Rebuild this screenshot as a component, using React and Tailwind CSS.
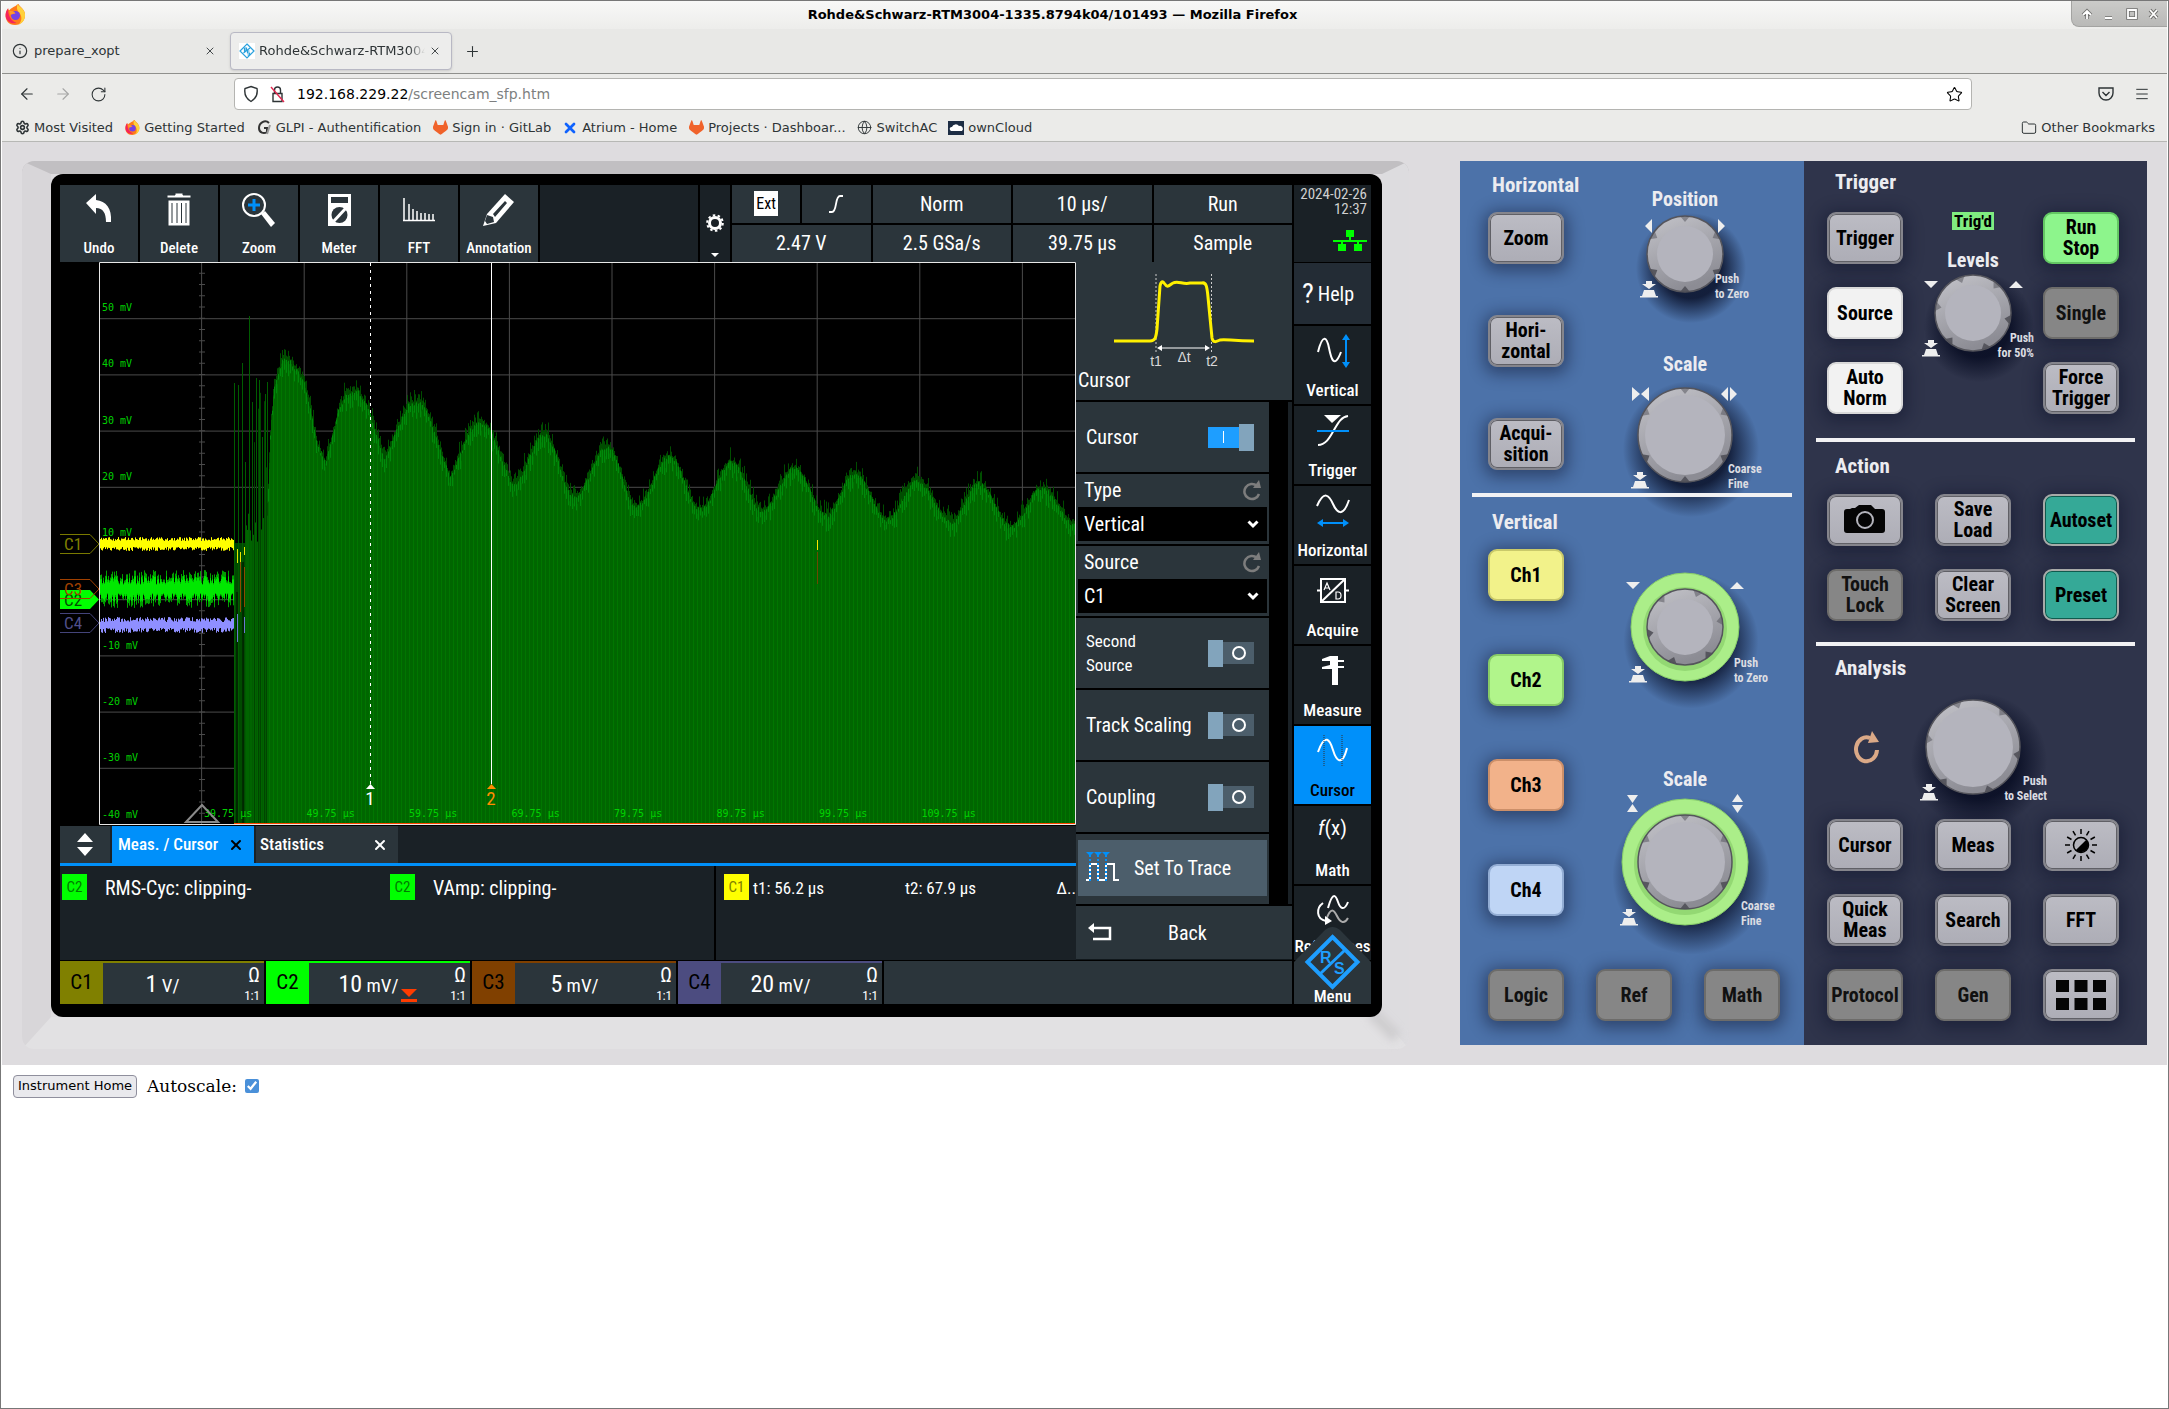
import React from 'react';
import { Info, X, Plus, ArrowLeft, ArrowRight, RotateCw, Star, Menu, Folder, Globe, Settings } from 'lucide-react';
import { SiGitlab } from 'react-icons/si';

/* ---------- browser chrome ---------- */

const Bookmark = ({ icon, children }) => (
    <a href="#" className="flex items-center gap-1 whitespace-nowrap">
        <span className="w-4 h-4 flex items-center justify-center">{icon}</span>
        {children}
    </a>
);

const FirefoxLogo = ({ size }) => (
    <svg width={size} height={size} viewBox="0 0 20 20">
        <path d="M10 2c1-1 1.500-1.500 3-2 0 2 5 4 6 9 .8 6-3.500 11-9.500 11S0 15.500 .6 10C.8 7 2 5.500 3 4c0 1 .4 1.600 1 2 2-2 4-3 6-4z" fill="#ff7a1a" />
        <path d="M12 0c1 2.500 6 4 7 9 .7 5-2 9-6 10.500 4-4 3-9 0-12C11 5.500 11 3 12 0z" fill="#ffd13a" />
        <path d="M.6 10C.8 7 2 5.500 3 4c0 3 0 11 8 14-6 2-11-3-10.400-8z" fill="#f5235b" />
        <circle cx="10" cy="11" r="4.300" fill="#7542e5" />
        <path d="M4 7c3-1 5 0 6 2-2 0-3 1-5 1z" fill="#ff9a2a" />
    </svg>
);

const RsFavicon = () => (
    <svg width="16" height="16" viewBox="0 0 16 16" className="bg-white">
        <path d="M8 1l7 7-7 7-7-7zM4.500 10L11 5M5.500 5v4M5.500 5h2v2h-2M10.500 8h-2v2h2v2h-2" fill="none" stroke="#2aa1dd" strokeWidth="1.200" />
    </svg>
);

const GitLab = () => <SiGitlab size={15} color="#f0622a" />;

const Chrome = () => (
    <header className="text-[13px] text-[#2e3436] bg-[#ebebe9]">
        <div className="relative h-7 pr-16 flex items-center justify-center bg-linear-to-b from-[#f8f8f7] to-[#ededeb]">
            <span className="absolute left-[3px] top-[3px]"><FirefoxLogo size={21} /></span>
            <h1 className="font-bold text-black">Rohde&amp;Schwarz-RTM3004-1335.8794k04/101493 — Mozilla Firefox</h1>
            <div className="absolute right-0 top-0 h-[26px] w-24 rounded-bl-lg border-l border-b border-[#a3a3a1] bg-linear-to-b from-[#cbcbc9] to-[#b9b9b7] flex items-center justify-center">
                <svg width="94" height="16" viewBox="0 0 94 16" fill="none">
                    <path d="M14 13V5M10 9l4-4 4 4M32 12h7M55 4h8v8h-8zM77 4l7 8M84 4l-7 8" stroke="#6f6f6d" strokeWidth="3.500" />
                    <path d="M14 13V5M10 9l4-4 4 4M32 12h7M55 4h8v8h-8zM77 4l7 8M84 4l-7 8" stroke="#fff" strokeWidth="1.800" />
                </svg>
            </div>
        </div>
        <div className="h-[45px] flex items-center bg-[#e8e8e6] border-b border-[#8f908d]">
            <div className="w-[228px] pl-2.5 pr-3.5 flex items-center gap-1.5">
                <Info size={16} strokeWidth={1.75} />
                <span className="flex-1">prepare_xopt</span>
                <X size={12} strokeWidth={1.75} />
            </div>
            <div className="w-[222px] h-[38px] pl-2 pr-2.5 flex items-center gap-1 rounded border border-[#b8b8c4] bg-[#ededec] shadow-sm">
                <RsFavicon />
                <span className="flex-1 overflow-hidden whitespace-nowrap mask-r-from-90%">Rohde&amp;Schwarz-RTM3004-1335</span>
                <X size={12} strokeWidth={1.75} />
            </div>
            <button aria-label="New tab" className="ml-3"><Plus size={17} strokeWidth={1.500} /></button>
        </div>
        <div className="h-10 flex items-center">
            <div className="w-[232px] pl-4 flex items-center gap-[18px]">
                <button aria-label="Back"><ArrowLeft size={18} strokeWidth={1.500} /></button>
                <button aria-label="Forward" className="text-[#a5a6a5]"><ArrowRight size={18} strokeWidth={1.500} /></button>
                <button aria-label="Reload"><RotateCw size={17} strokeWidth={1.500} /></button>
            </div>
            <div className="flex-1 h-8 px-2 flex items-center bg-white border border-[#b4b4b1] rounded text-[14px]">
                <svg width="16" height="18" viewBox="0 0 16 18" fill="none" stroke="#2e3436" strokeWidth="1.400"><path d="M8 1.500l6 2c1 6-1 10-6 13-5-3-7-7-6-13z" /></svg>
                <svg width="18" height="18" viewBox="0 0 18 18" fill="none" stroke="#2e3436" strokeWidth="1.400" className="ml-2.5">
                    <path d="M4 8.500h9v8H4zM5.500 8V5a3 3 0 0 1 6 0v3" />
                    <path d="M2 2l13 15" stroke="#e22850" />
                </svg>
                <div className="ml-2.5 flex-1 text-[#7d7f80]"><span className="text-black">192.168.229.22</span>/screencam_sfp.htm</div>
                <Star size={17} strokeWidth={1.500} className="text-black" />
            </div>
            <div className="w-[195px] pr-[17px] flex items-center justify-end gap-5">
                <svg width="16" height="16" viewBox="0 0 16 16" fill="none" stroke="#2e3436" strokeWidth="1.400"><path d="M1 2h14v5a7 7 0 0 1-14 0zM4.500 6L8 9.500 11.500 6" /></svg>
                <Menu size={16} strokeWidth={1.500} />
            </div>
        </div>
        <nav className="h-7 pl-3 pr-3 flex items-center gap-[11px] border-b border-[#b7b8b5]">
            <Bookmark icon={<Settings size={15} strokeWidth={2.500} />}>Most Visited</Bookmark>
            <Bookmark icon={<FirefoxLogo size={15} />}>Getting Started</Bookmark>
            <Bookmark icon={<svg width="14" height="15" viewBox="0 0 14 15" fill="none" stroke="#333" strokeWidth="2"><path d="M12 3C8-1 2 3 2 8c0 5 5 6 8 4V8H7" /><path d="M13 5l-3 9" stroke="#999" /></svg>}>GLPI - Authentification</Bookmark>
            <Bookmark icon={<GitLab />}>Sign in · GitLab</Bookmark>
            <Bookmark icon={<X size={16} strokeWidth={4} color="#0f62fe" />}>Atrium - Home</Bookmark>
            <Bookmark icon={<GitLab />}>Projects · Dashboar...</Bookmark>
            <Bookmark icon={<Globe size={15} strokeWidth={1.500} />}>SwitchAC</Bookmark>
            <Bookmark icon={<svg width="16" height="14" viewBox="0 0 16 14"><path d="M0 0h16v14H0z" fill="#1d2d44" /><path d="M2 9a2 2 0 0 1 2-3 4 4 0 0 1 7-1 3 3 0 0 1 3 5H3z" fill="#fff" /></svg>}>ownCloud</Bookmark>
            <div className="flex-1" />
            <Bookmark icon={<Folder size={16} strokeWidth={1.500} />}>Other Bookmarks</Bookmark>
        </nav>
    </header>
);

/* ---------- trace plot ---------- */

const W = 977;
const H = 563;

// repeatable noise so the traces look the same on every load
const noise = (n) => {
    const s = Math.sin(n * 127.1) * 43758.5453;
    return s - Math.floor(s);
};

const ENVELOPE = [
    [168, 250], [171, 170], [175, 122], [184, 94], [191, 98], [204, 116], [211, 145], [218, 180], [226, 200],
    [239, 148], [246, 132], [258, 127], [269, 145], [285, 196], [299, 163], [309, 141], [324, 139], [332, 160],
    [351, 215], [370, 167], [381, 157], [391, 167], [413, 221], [445, 171], [475, 233], [508, 183],
    [537, 243], [570, 193], [601, 246], [632, 199], [663, 247], [695, 205], [727, 252], [755, 210], [788, 256],
    [817, 217], [852, 258], [879, 220], [912, 263], [942, 225], [977, 262],
];

const envelopeAt = (x) => {
    const i = Math.max(1, ENVELOPE.findIndex((p) => p[0] >= x));
    const [x0, y0] = ENVELOPE[i - 1];
    const [x1, y1] = ENVELOPE[i];
    const t = (x - x0) / (x1 - x0);
    const smooth = (1 - Math.cos(Math.PI * t)) / 2;
    return y0 + (y1 - y0) * (x1 - x0 > 24 ? smooth : t);
};

const columns = (from, to, step, fn) => {
    let d = '';
    for (let x = from; x < to; x += step) {
        const [a, b] = fn(x);
        d += `M${x + 0.5} ${a.toFixed(1)}V${b.toFixed(1)}`;
    }
    return d;
};

const BODY = columns(168, W, 1, (x) => [envelopeAt(x) + noise(x) * 6 - 1, H]);
const HAIR = columns(168, W, 1, (x) => [envelopeAt(x) - noise(x + 7) * noise(x + 3) * 16, H]);
const STRIPES = columns(170, W, 4, (x) => [envelopeAt(x) + noise(x) * 12, H]);
const SPARK = columns(169, W, 2, (x) => [envelopeAt(x) + 4 * noise(x), envelopeAt(x) + 6 + noise(x + 1) * 12]);
const band = (y, half, rough) => columns(1, 135, 1, (x) => [y - half - noise(x + y) * rough, y + half + noise(x * 3 + y) * rough]);
const BURST = [[135, 121], [139, 123], [143, 101], [146, 200], [150, 54], [153, 140], [157, 116], [160, 118], [163, 175], [166, 132], [168, 120]];

const V_LABELS = ['50 mV', '40 mV', '30 mV', '20 mV', '10 mV', '', '-10 mV', '-20 mV', '-30 mV', '-40 mV'];
const H_LABELS = ['39.75', '49.75', '59.75', '69.75', '79.75', '89.75', '99.75', '109.75'];

const Plot = () => (
    <svg viewBox={`0 0 ${W} ${H}`} preserveAspectRatio="none" className="block flex-1 min-w-0 h-[563px] bg-black" fontFamily="DejaVu Sans Mono, monospace" fontSize="10">
        <g stroke="#4a4a4a">
            {[1, 2, 3, 4, 5, 6, 7, 8, 9].map((i) => (
                <React.Fragment key={i}>
                    <path d={`M${i * 102.6} 0V${H}`} />
                    <path d={`M0 ${i * 56.2 + 0.5}H${W}`} />
                </React.Fragment>
            ))}
            <path d={Array.from({ length: 50 }, (_, i) => `M100 ${i * 11.25}h6`).join('')} />
        </g>
        <path d="M135 281H168V563H135z" fill="#004a00" />
        <path d={columns(146, 169, 1, (x) => [281 - noise(x) * 30, H])} stroke="#006400" />
        <path d={columns(153, 170, 2, (x) => [130 + noise(x) * 130, H])} stroke="#004500" />
        {BURST.map(([x, y]) => <path key={x} d={`M${x + 0.5} ${y}V${H}`} stroke="#005c00" />)}
        <path d="M138 330V563M144 300V563" stroke="#001c00" strokeWidth="1.500" />
        <path d={HAIR} stroke="#004d00" />
        <path d={BODY} stroke="#006600" />
        <path d={STRIPES} stroke="#007600" />
        <path d={SPARK} stroke="#008a0c" />
        <path d={band(282, 3, 4)} stroke="#ffff00" />
        <path d={band(327, 5, 14)} stroke="#00a000" />
        <path d={band(327, 4, 9)} stroke="#00e800" />
        <path d={band(363, 3, 5)} stroke="#8f8fff" />
        <path d="M138.500 287v14M141.500 290v10M145.500 285v8" stroke="#e6e600" />
        <path d="M141.500 300v50M145.500 305v40" stroke="#8a4b00" />
        <path d="M138.500 352v28M145.500 355v16" stroke="#6c78d0" />
        <path d="M718.500 278v10" stroke="#ffe600" />
        <path d="M718.500 290v32" stroke="#6b4a00" />
        <g fill="#00d200">
            {V_LABELS.map((t, i) => <text key={i} x="3" y={49 + i * 56.3}>{t}</text>)}
            {H_LABELS.map((t, i) => <text key={t} x={105 + i * 102.5} y="555">{t} µs</text>)}
        </g>
        <path d="M87 560L103 543l16 17z" fill="none" stroke="#8a8a8a" strokeWidth="2" />
        <path d="M271.500 1V522" stroke="#fff" strokeDasharray="3 4" />
        <path d="M392.500 1V522" stroke="#fff" />
        <path d="M267 527l4.500-5 4.500 5z" fill="#fff" />
        <path d="M388 527l4.500-5 4.500 5z" fill="#ff8c00" />
        <g fontFamily="Roboto Condensed, Noto Sans, sans-serif" fontSize="19" textAnchor="middle">
            <text x="271" y="543" fill="#fff">1</text>
            <text x="392" y="543" fill="#ff8c00">2</text>
        </g>
        <path d={`M.5 .5H${W - 0.5}V${H - 0.5}H.5z`} fill="none" stroke="#e8e8e8" />
        <path d={`M135 ${H - 1.5}H${W - 1}`} stroke="#ff4400" />
    </svg>
);

const ChannelTags = () => (
    <svg viewBox="0 0 39 563" className="block w-[39px] h-[563px]" fontFamily="Roboto Condensed, Noto Sans, sans-serif" fontSize="17">
        <path d="M0 328h30l9 9.500-9 9.500H0z" fill="#00ff00" />
        <text x="4" y="344" fill="#004d00">C2</text>
        <path d="M0 272.500h30l9 9.500-9 9.500H0" fill="none" stroke="#7a7a00" />
        <text x="4" y="288" fill="#808000">C1</text>
        <path d="M0 317.500h30l9 9.500-9 9.500H0" fill="none" stroke="#a04000" />
        <text x="4" y="333" fill="#a04000">C3</text>
        <path d="M0 351.500h30l9 9.500-9 9.500H0" fill="none" stroke="#44447a" />
        <text x="4" y="367" fill="#50508c">C4</text>
    </svg>
);

/* ---------- instrument screen ---------- */

const ToolButton = ({ label, children }) => (
    <button className="w-[78px] pt-2 pb-0.5 flex flex-col items-center justify-between bg-[#2b353b] text-white text-[15px] leading-6 font-medium">
        <svg width="40" height="36" viewBox="0 0 40 36">{children}</svg>
        {label}
    </button>
);

const StatusCell = ({ children }) => (
    <div className="flex items-center justify-center bg-[#2b353b]">{children}</div>
);

const SideButton = ({ label, active, children }) => (
    <button className={`h-[78px] pt-2 pb-1 flex flex-col items-center justify-between text-[17px] leading-5 font-medium ${active ? 'bg-[#0090fa] text-black' : 'bg-[#1a2126] text-white'}`}>
        <svg width="40" height="36" viewBox="0 0 40 36" fill="none" stroke="#fff" strokeWidth="2">{children}</svg>
        {label}
    </button>
);

const Toggle = ({ label, small, on }) => (
    <label className="h-[70px] pl-2.5 pr-[15px] flex items-center justify-between bg-[#2b353b]">
        <span className={small ? 'w-16 text-[17px] leading-6' : 'text-[20px]'}>{label}</span>
        <input type="checkbox" defaultChecked={on} className="sr-only" />
        {on ? (
            <span className="flex items-center">
                <span className="w-[31px] h-[21px] bg-[#1e9eff] flex items-center justify-center"><span className="w-px h-3 bg-white" /></span>
                <span className="w-[15px] h-[27px] bg-[#82a4bc]" />
            </span>
        ) : (
            <span className="flex items-center">
                <span className="w-[15px] h-[27px] bg-[#82a4bc]" />
                <span className="w-[31px] h-[22px] bg-[#4c5e6b] flex items-center justify-center"><span className="w-3.5 h-3.5 rounded-full border-2 border-white" /></span>
            </span>
        )}
    </label>
);

const Dropdown = ({ label, value }) => (
    <label className="h-[70px] px-0.5 pb-[3px] flex flex-col justify-between bg-[#2b353b]">
        <span className="pl-1.5 pr-1 pt-1 flex items-center justify-between text-[20px] leading-6">
            {label}
            <svg width="22" height="22" viewBox="0 0 22 22"><path d="M16 7a7.500 7.500 0 1 0 2 8" fill="none" stroke="#7d7d7d" strokeWidth="2.500" /><path d="M12 9h8l-2-8z" fill="#7d7d7d" /></svg>
        </span>
        <span className="relative">
            <select defaultValue={value} className="appearance-none block w-full h-[34px] pl-1.5 bg-black text-white text-[20px]">
                <option>{value}</option>
            </select>
            <svg width="12" height="10" viewBox="0 0 12 10" className="absolute right-2 top-3"><path d="M1.500 2.500L6 7l4.500-4.500" fill="none" stroke="#fff" strokeWidth="3" /></svg>
        </span>
    </label>
);

const CursorMenu = () => (
    <div className="w-[216px] flex flex-col gap-[2px] text-[20px]">
        <div className="h-[138px] bg-[#2b353b]">
            <svg width="216" height="106" viewBox="0 0 216 106" className="block" fontFamily="Liberation Sans, sans-serif" fontSize="14">
                <path d="M80 12v80M135.500 12v80" stroke="#ccc" strokeDasharray="2 2" />
                <path d="M38 79h36c5 0 6-3 7-12l3-43c1-5 3-5 4-3 4 6 5 2 9 0 5-3 10 2 17 0h12c4-1 5 3 6 14l4 41c1 5 4 4 8 2 6-1 12 1 34 1" fill="none" stroke="#fff000" strokeWidth="3" />
                <path d="M84 86h48" stroke="#fff" />
                <path d="M81 86l5-3v6zM134 86l-5-3v6z" fill="#fff" />
                <g fill="#d8d8d8" textAnchor="middle">
                    <text x="80" y="104">t1</text>
                    <text x="108" y="100">Δt</text>
                    <text x="136" y="104">t2</text>
                </g>
            </svg>
            <h2 className="px-0.5 leading-6">Cursor</h2>
        </div>
        <div className="flex justify-between">
            <div className="w-[193px] flex flex-col gap-[2px]">
                <Toggle label="Cursor" on />
                <Dropdown label="Type" value="Vertical" />
                <Dropdown label="Source" value="C1" />
                <Toggle label="Second Source" small />
                <Toggle label="Track Scaling" />
                <Toggle label="Coupling" />
                <div className="h-[70px] px-0.5 pt-1.5 bg-[#2b353b]">
                    <button className="w-full h-14 pl-2 flex items-center gap-3.5 bg-[#4c5e6b]">
                        <svg width="34" height="34" viewBox="0 0 34 34" fill="none">
                            <path d="M0 29h4V13h8v16h8V13h8v16h5" stroke="#fff" strokeWidth="2" />
                            <path d="M4 4v28M12 4v28M20 4v28" stroke="#0090fa" strokeWidth="2" strokeDasharray="2 2" />
                            <path d="M0 1h8l-4 4zM8 1h8l-4 4zM16 1h8l-4 4z" fill="#0090fa" />
                        </svg>
                        Set To Trace
                    </button>
                </div>
            </div>
            <div className="w-[17px] border-l-[13px] border-black bg-[#1a2126]" />
        </div>
        <button className="flex-1 pl-3 flex items-center gap-14 bg-[#2b353b] border-b border-[#11181c]">
            <svg width="24" height="20" viewBox="0 0 24 20" fill="none" stroke="#fff" strokeWidth="2.500"><path d="M4 5h18v11H5" /><path d="M6 0L0 5l6 5z" fill="#fff" stroke="none" /></svg>
            Back
        </button>
    </div>
);

const Channel = ({ name, value, unit, tag, line, clipped }) => (
    <div className="w-[204px] flex">
        <div className={`w-[43px] flex items-center justify-center text-[21px] text-black ${tag}`}>{name}</div>
        <div className={`flex-1 flex bg-[#2b353b] border-t-2 ${line}`}>
            <div className="flex-1 flex items-center justify-center">
                <span className="relative whitespace-nowrap text-[19px]">
                    <span className="text-[24px]">{value}</span> {unit}
                    {clipped && <svg width="16" height="13" viewBox="0 0 16 13" className="absolute -right-[18px] bottom-0"><path d="M0 0h16L8 8zM0 10h16v3H0z" fill="#ff3c00" /></svg>}
                </span>
            </div>
            <div className="w-[42px] pr-1 flex flex-col items-end justify-between">
                <span className="text-[20px] leading-6">Ω</span>
                <span className="text-[13px] leading-4">1:1</span>
            </div>
        </div>
    </div>
);

const Badge = ({ children, className = '' }) => (
    <span className={`w-[25px] h-[26px] text-center text-[15px] leading-[26px] ${className}`}>{children}</span>
);

const Screen = () => (
    <div className="bg-black text-white font-['Roboto_Condensed','Noto_Sans',sans-serif]">
        <div className="h-[77px] flex gap-[2px]">
            <ToolButton label="Undo">
                <path d="M7 10L17 1v6c10 1 16 8 15 22h-5c0-9-3-14-10-14v6z" fill="#fff" />
            </ToolButton>
            <ToolButton label="Delete">
                <path d="M8 2h8V0h8v2h8v3H8zM9 7h22v26H9zM13 10v20M18 10v20M22.500 10v20M27 10v20" fill="#fff" stroke="#2b353b" />
            </ToolButton>
            <ToolButton label="Zoom">
                <circle cx="15" cy="12" r="11" fill="none" stroke="#fff" strokeWidth="2" />
                <path d="M15 6v12M9 12h12" stroke="#0090fa" strokeWidth="3" />
                <path d="M22 21l4-3 10 12-4 4z" fill="#fff" />
            </ToolButton>
            <ToolButton label="Meter">
                <path d="M9 1h23v32H9z" fill="#fff" />
                <path d="M12 4h17v6H12z" fill="#2b353b" />
                <circle cx="20.500" cy="22" r="8" fill="#2b353b" />
                <path d="M14 29l13-14" stroke="#fff" strokeWidth="3" />
            </ToolButton>
            <ToolButton label="FFT">
                <path d="M5 5v23M10 11v17M14 16v12M18 18v10M22 20v8M26 20v8M30 21v7M34 21v7M4 27.500h32" stroke="#fff" strokeWidth="1.500" fill="none" />
            </ToolButton>
            <ToolButton label="Annotation">
                <path d="M4 33l4-12L26 1l9 8-18 21z" fill="#fff" />
                <path d="M14 21L26 8l2 2-12 14zM8 22l6 2 1 5-7 2-2-3z" fill="#2b353b" />
            </ToolButton>
            <div className="flex-1 bg-[#1a2126]" />
            <button aria-label="Toolbar settings" className="w-[30px] pt-[29px] flex flex-col items-center justify-between pb-1 bg-[#1a2126]">
                <svg width="18" height="18" viewBox="0 0 18 18"><circle cx="9" cy="9" r="5.500" fill="none" stroke="#fff" strokeWidth="3" /><circle cx="9" cy="9" r="7.800" fill="none" stroke="#fff" strokeWidth="2" strokeDasharray="2.500 2.400" /></svg>
                <svg width="8" height="5" viewBox="0 0 8 5"><path d="M0 0h8L4 4z" fill="#fff" /></svg>
            </button>
            <div className="w-[560px] grid grid-cols-4 grid-rows-2 gap-[2px] text-[20px]">
                <div className="grid grid-cols-2 gap-[2px]">
                    <StatusCell><span className="px-0.5 leading-[25px] bg-white text-[16px] text-black">Ext</span></StatusCell>
                    <StatusCell><svg width="16" height="18" viewBox="0 0 16 18"><path d="M1 17h3c2 0 3-2 4-8s2-8 4-8h3" fill="none" stroke="#fff" strokeWidth="1.800" /></svg></StatusCell>
                </div>
                <StatusCell>Norm</StatusCell>
                <StatusCell>10 µs/</StatusCell>
                <StatusCell>Run</StatusCell>
                <StatusCell>2.47 V</StatusCell>
                <StatusCell>2.5 GSa/s</StatusCell>
                <StatusCell>39.75 µs</StatusCell>
                <StatusCell>Sample</StatusCell>
            </div>
            <div className="w-[77px] pr-1 pt-0.5 pb-2.5 flex flex-col items-end justify-between bg-[#1a2126] text-[15px] leading-[15px] text-[#d0d0d0]">
                <div className="text-right">2024-02-26<br />12:37</div>
                <svg width="34" height="22" viewBox="0 0 34 22"><path d="M13 0h8v7h-8zM5 14h8v7H5zM21 14h8v7h-8zM16 6h2v4h16v2H0v-2h16zM8 11h2v4H8zM24 11h2v4h-2z" fill="#00ff00" /></svg>
            </div>
        </div>
        <div className="flex gap-[2px]">
            <div className="flex-1 min-w-0">
                <div className="h-[698px] flex">
                    <div className="flex-1 min-w-0 flex flex-col">
                        <div className="flex">
                            <ChannelTags />
                            <Plot />
                        </div>
                        <div className="mt-px h-10 flex gap-[2px] bg-[#1a2126] border-b-[3px] border-[#0090fa] text-[17px] font-medium">
                            <button aria-label="Resize" className="w-[50px] flex items-center justify-center bg-[#2b353b]">
                                <svg width="16" height="26" viewBox="0 0 16 26"><path d="M0 10L8 1l8 9zM0 15h16l-8 9z" fill="#fff" /></svg>
                            </button>
                            <button className="w-[142px] pl-1.5 pr-2.5 flex items-center justify-between bg-[#0090fa]">Meas. / Cursor<X size={16} strokeWidth={3} color="#000" /></button>
                            <button className="w-[142px] pl-1 pr-2.5 flex items-center justify-between bg-[#2b353b]">Statistics<X size={16} strokeWidth={3} /></button>
                        </div>
                        <div className="flex-1 flex bg-[#1a2126] text-[20px] leading-7">
                            <div className="w-[656px] pl-0.5 pt-2 flex border-r-2 border-black">
                                <div className="w-[328px] flex gap-[18px]"><Badge className="bg-[#00ff00] text-[#007a00]">C2</Badge>RMS-Cyc: clipping-</div>
                                <div className="flex gap-[18px]"><Badge className="bg-[#00ff00] text-[#007a00]">C2</Badge>VAmp: clipping-</div>
                            </div>
                            <div className="flex-1 min-w-0 pl-2 pt-2 flex text-[17px]">
                                <Badge className="mr-1 bg-[#ffff00] text-[#808000]">C1</Badge>
                                <span className="w-[152px]">t1: 56.2 µs</span>
                                <span className="flex-1">t2: 67.9 µs</span>
                                <span>Δ..</span>
                            </div>
                        </div>
                    </div>
                    <CursorMenu />
                </div>
                <div className="mt-px h-[43px] flex gap-[2px]">
                    <Channel name="C1" value="1" unit="V/" tag="bg-[#808000]" line="border-[#808000]" />
                    <Channel name="C2" value="10" unit="mV/" tag="bg-[#00ff00]" line="border-[#00ff00]" clipped />
                    <Channel name="C3" value="5" unit="mV/" tag="bg-[#804000]" line="border-[#804000]" />
                    <Channel name="C4" value="20" unit="mV/" tag="bg-[#4c4c80]" line="border-[#4c4c80]" />
                    <div className="flex-1 bg-[#2b353b]" />
                </div>
            </div>
            <div className="w-[77px] flex flex-col gap-[2px]">
                <button className="h-[61px] mt-px pl-2 flex items-center gap-1 bg-[#232c35] text-[20px]"><span className="text-[28px]">?</span>Help</button>
                <SideButton label="Vertical">
                    <path d="M5 18c5-20 9-14 11-4s5 22 12 4" /><path d="M33 4v26" stroke="#0090fa" /><path d="M29 6l4-6 4 6zM29 28l4 6 4-6z" fill="#0090fa" stroke="none" />
                </SideButton>
                <SideButton label="Trigger">
                    <path d="M5 31c8 0 12-8 16-15s7-13 14-14" /><path d="M4 17h32" stroke="#0090fa" /><path d="M11 1h17l-9 8z" fill="#fff" stroke="none" />
                </SideButton>
                <SideButton label="Horizontal">
                    <path d="M4 12c7-16 12-11 16-2s10 14 16-4" /><path d="M8 29h24" stroke="#0090fa" /><path d="M10 25l-6 4 6 4zM30 25l6 4-6 4z" fill="#0090fa" stroke="none" />
                </SideButton>
                <SideButton label="Acquire">
                    <path d="M8 5h24v23H8zM8 28L32 5M4 16.500h4M32 16.500h4" /><path d="M11 16l3-7 3 7M12 14h4M23 18h2c4 0 4 7 0 7h-2z" strokeWidth="1.200" />
                </SideButton>
                <SideButton label="Measure">
                    <path d="M17 2h8v4h6v2h-6v4h6v2h-6v17h-6V15H9v-2l8-2V7H9V5z" fill="#fff" stroke="none" />
                </SideButton>
                <SideButton label="Cursor" active>
                    <path d="M5 18c7-20 12-12 15-2s9 18 14-2" /><path d="M11 1v32M29 1v32" stroke="#333" strokeWidth="1" strokeDasharray="1 1" />
                </SideButton>
                <button className="h-[78px] pt-2.5 pb-1 flex flex-col items-center justify-between bg-[#1a2126] text-[17px] leading-5 font-medium"><span className="text-[21px] leading-6 font-normal"><i>f</i>(x)</span>Math</button>
                <div className="h-[74px] overflow-hidden flex flex-col">
                    <SideButton label="References">
                        <path d="M15 14c5-18 8-12 10-6s6 10 10 0" /><path d="M13 26c5-14 8-10 11-4s7 9 11 2" stroke="#aaa" /><path d="M10 9c-7 5-7 16 3 18" /><path d="M12 22l7 5-7 4z" fill="#fff" stroke="none" />
                    </SideButton>
                </div>
                <button className="relative h-[42px] bg-[#2b353b] text-[17px] leading-4 font-medium flex items-end justify-center">
                    <svg width="77" height="66" viewBox="0 0 77 66" className="absolute left-0 -top-9">
                        <path d="M0 36L31 4c5-4 10-4 15 0l31 32v6H0z" fill="#2b353b" />
                        <path d="M38.500 11l25 25-25 25-25-25z" fill="none" stroke="#1e9eff" strokeWidth="4" />
                        <path d="M26 48L51 24" stroke="#1e9eff" strokeWidth="3" />
                        <g fill="#1e9eff" fontFamily="Liberation Sans, sans-serif" fontWeight="700" fontSize="16"><text x="26" y="37">R</text><text x="40" y="48">S</text></g>
                    </svg>
                    <span className="relative">Menu</span>
                </button>
            </div>
        </div>
    </div>
);

/* ---------- front panel ---------- */

const KEY_STYLES = {
    grey: 'bg-linear-to-b from-[#bcbcc4] to-[#adadb6] border-[#85858c] ring-1 ring-inset ring-[#606066] text-black',
    off: 'bg-[#868686] border-[#6d6c6a] text-[#111]',
    white: 'bg-[#f2f2f2] border-[#d8d8d8] text-black',
    green: 'bg-[#8df58c] border-[#63c763] text-black',
    teal: 'bg-[#35a997] border-[#a8aaa8] ring-1 ring-inset ring-[#0f5a4e] text-black',
    ch1: 'bg-[#f2f28a] border-[#c9c96a] text-black',
    ch2: 'bg-[#b1f58b] border-[#88cc66] text-black',
    ch3: 'bg-[#f2b28a] border-[#cc8f69] text-black',
    ch4: 'bg-[#bfd5f5] border-[#93add4] text-black',
};

const Key = ({ look = 'grey', label, children }) => (
    <button aria-label={label} className={`w-[76px] h-[52px] flex items-center justify-center rounded-[9px] border-2 text-center text-[20px] leading-[21px] font-bold shadow-[0_3px_16px_4px_rgba(10,15,40,0.45)] ${KEY_STYLES[look]}`}>
        {children}
    </button>
);

const MARKS = {
    position: 'M-40-28l7-7v14zM40-28l-7-7v14z',
    hscale: 'M-53-48l8 7-8 7zM-36-48l-8 7 8 7zM43-48l-7 7 7 7zM45-48l7 7-7 7z',
    vertical: 'M-59-45h14l-7 7zM45-38h14l-7-7z',
    vscale: 'M-58-67h11l-5.500 8zM-58-50h11l-5.500-8zM47-60h11l-5.500-8zM47-57h11l-5.500 8z',
    levels: 'M-49-32h14l-7 7zM36-25h14l-7-7z',
    plain: '',
};

const Dial = ({ r, ring = 0, turn = 0, mark, push, height, legend, children }) => (
    <div className={`relative w-[180px] flex items-center justify-center ${height}`}>
        <svg width="180" height="160" viewBox="-90 -80 180 160" className="overflow-visible shrink-0 -my-10">
            <defs>
                <linearGradient id={`face${mark}`} x1="0" y1="0" x2="0.400" y2="1">
                    <stop offset="0" stopColor="#c4c4ca" /><stop offset="1" stopColor="#8c8c94" />
                </linearGradient>
                <radialGradient id={`cast${mark}`}>
                    <stop offset="0.550" stopColor="#050a20" stopOpacity="0.800" /><stop offset="1" stopColor="#050a20" stopOpacity="0" />
                </radialGradient>
            </defs>
            <circle cx="6" cy="14" r={(ring || r) * (ring ? 1.25 : 1.45)} fill={`url(#cast${mark})`} />
            {ring > 0 && <circle r={ring} fill="#abee89" stroke="#86cc68" />}
            {ring > 0 && <circle r={r + 4} cy="2" fill="#93d873" />}
            <circle r={r} fill={`url(#face${mark})`} stroke="#55555c" strokeWidth="1.500" />
            {[0, 60, 120, 180, 240, 300].map((a) => (
                <path key={a} d={`M-5-${r}h10l-5 6z`} fill="#505058" fillOpacity={a > 60 && a < 300 ? 0.9 : 0.5} transform={`rotate(${a + turn})`} />
            ))}
            <circle r={r > 40 ? r - 7 : r - 10} fill="#b4b4bd" />
            <path d={MARKS[mark]} fill="#eee" />
            <path d="M-7 3h14l-7 5zM-3 0h6v4h-6zM-5 9h10l2 6h2v1.500H-9V15h2z" fill="#eee" transform={`translate(${push[0]} ${push[1]})`} />
        </svg>
        <div className={`absolute text-[12px] leading-[15px] font-bold whitespace-nowrap text-[#dcdde2] ${legend}`}>{children}</div>
    </div>
);

const Heading = ({ children }) => <h2 className="px-2 text-[21px] leading-[22px] font-bold text-[#ececf0] whitespace-nowrap">{children}</h2>;
const DialTitle = ({ children }) => <h3 className="text-[20px] leading-[22px] font-bold text-[#ececf0] text-center">{children}</h3>;

const FrontPanel = () => (
    <div className="w-[687px] h-[884px] flex font-['Roboto_Condensed','Liberation_Sans',sans-serif]">
        <div className="w-[344px] bg-[#4c72a9]">
            <section className="h-[332px] pl-7 flex gap-[31px]">
                <div className="w-[76px] pt-[13px]">
                    <div className="-ml-1"><Heading>Horizontal</Heading></div>
                    <div className="mt-4 flex flex-col gap-[51px]">
                        <Key>Zoom</Key>
                        <Key>Hori-<br />zontal</Key>
                        <Key>Acqui-<br />sition</Key>
                    </div>
                </div>
                <div className="pt-[27px]">
                    <DialTitle>Position</DialTitle>
                    <Dial r={38} mark="position" push={[-36, 27]} height="h-[88px]" legend="left-[120px] top-[62px]">Push<br />to Zero</Dial>
                    <div className="h-[55px]" />
                    <DialTitle>Scale</DialTitle>
                    <Dial r={47} mark="hscale" push={[-45, 37]} height="h-[120px]" legend="left-[133px] top-[87px]">Coarse<br />Fine</Dial>
                </div>
            </section>
            <div className="relative mx-3 h-1 bg-[#f2f2f4]" />
            <section className="pt-[14px]">
                <div className="pl-7 flex gap-[31px]">
                    <div className="w-[76px]">
                        <div className="-ml-1"><Heading>Vertical</Heading></div>
                        <div className="mt-4 mb-[53px] flex flex-col gap-[53px]">
                            <Key look="ch1">Ch1</Key>
                            <Key look="ch2">Ch2</Key>
                            <Key look="ch3">Ch3</Key>
                            <Key look="ch4">Ch4</Key>
                        </div>
                    </div>
                    <div className="pt-14">
                        <Dial r={38} ring={54} turn={20} mark="vertical" push={[-47, 39]} height="h-[120px]" legend="left-[139px] top-[89px]">Push<br />to Zero</Dial>
                        <div className="h-[81px]" />
                        <DialTitle>Scale</DialTitle>
                        <Dial r={47} ring={63} mark="vscale" push={[-56, 47]} height="h-[144px]" legend="left-[146px] top-[109px]">Coarse<br />Fine</Dial>
                    </div>
                </div>
                <div className="relative pl-7 flex gap-8">
                    <Key look="off">Logic</Key>
                    <Key look="off">Ref</Key>
                    <Key look="off">Math</Key>
                </div>
            </section>
        </div>
        <div className="flex-1 bg-[#2f344b]">
            <section className="px-[23px] pt-2.5">
                <Heading>Trigger</Heading>
                <div className="mt-[19px] flex gap-8">
                    <div className="flex flex-col gap-[23px]">
                        <Key>Trigger</Key>
                        <Key look="white">Source</Key>
                        <Key look="white">Auto<br />Norm</Key>
                    </div>
                    <div className="w-[76px] flex flex-col items-center">
                        <div className="px-0.5 text-[17px] leading-[18px] font-bold bg-[#80ec80] text-black">Trig'd</div>
                        <div className="mt-[19px]"><DialTitle>Levels</DialTitle></div>
                        <Dial r={38} turn={-20} mark="levels" push={[-42, 27]} height="h-[84px]" legend="right-[29px] top-[60px] text-right">Push<br />for 50%</Dial>
                    </div>
                    <div className="relative flex flex-col gap-[23px]">
                        <Key look="green">Run<br />Stop</Key>
                        <Key look="off">Single</Key>
                        <Key>Force<br />Trigger</Key>
                    </div>
                </div>
            </section>
            <div className="mx-3 mt-6 h-1 bg-[#f2f2f4]" />
            <section className="px-[23px] pt-[13px]">
                <Heading>Action</Heading>
                <div className="mt-[17px] grid grid-cols-3 gap-x-8 gap-y-[23px] w-max">
                    <Key label="Screenshot">
                        <svg width="42" height="30" viewBox="0 0 42 30"><path d="M3 4h3l2-1h3l4-3h12l4 4h7q3 0 3 3v18q0 3-3 3H3q-3 0-3-3V7q0-3 3-3z" fill="#050505" /><circle cx="21" cy="15" r="8" fill="none" stroke="#b4b4bc" strokeWidth="2" /></svg>
                    </Key>
                    <Key>Save<br />Load</Key>
                    <Key look="teal">Autoset</Key>
                    <Key look="off">Touch<br />Lock</Key>
                    <Key>Clear<br />Screen</Key>
                    <Key look="teal">Preset</Key>
                </div>
            </section>
            <div className="mx-3 mt-[21px] h-1 bg-[#f2f2f4]" />
            <section className="px-[23px] pt-[11px]">
                <Heading>Analysis</Heading>
                <div className="mt-2 flex items-center gap-8">
                    <div className="w-[76px] flex justify-center">
                        <svg width="30" height="34" viewBox="0 0 30 34"><path d="M20 8a10.500 12 0 1 0 7 12" fill="none" stroke="#dba987" strokeWidth="4" /><path d="M18 13l11-1-7-11z" fill="#dba987" /></svg>
                    </div>
                    <div className="w-[76px] flex justify-center"><Dial r={47} turn={-20} mark="plain" push={[-44, 37]} height="h-[120px]" legend="right-[16px] top-[87px] text-right">Push<br />to Select</Dial></div>
                </div>
                <div className="relative mt-3 grid grid-cols-3 gap-x-8 gap-y-[23px] w-max">
                    <Key>Cursor</Key>
                    <Key>Meas</Key>
                    <Key label="Brightness">
                        <svg width="34" height="34" viewBox="-17 -17 34 34"><circle r="7.500" fill="#b4b4bc" stroke="#000" strokeWidth="1.500" /><path d="M5.300-5.300A7.500 7.500 0 0 1-5.300 5.300z" fill="#000" />{[0, 30, 60, 90, 120, 150, 180, 210, 240, 270, 300, 330].map((a) => <path key={a} d="M0-11v-5" stroke="#000" strokeWidth="1.500" transform={`rotate(${a})`} />)}</svg>
                    </Key>
                    <Key>Quick<br />Meas</Key>
                    <Key>Search</Key>
                    <Key>FFT</Key>
                    <Key look="off">Protocol</Key>
                    <Key look="off">Gen</Key>
                    <Key label="Apps">
                        <svg width="50" height="32" viewBox="0 0 50 32"><path d="M0 1h13v12H0zM18.500 1h13v12h-13zM37 1h13v12H37zM0 19h13v12H0zM18.500 19h13v12h-13zM37 19h13v12H37z" fill="#050505" /></svg>
                    </Key>
                </div>
            </section>
        </div>
    </div>
);

const App = () => (
    <div className="min-h-screen border border-[#777] px-px bg-white font-['DejaVu_Sans',sans-serif]">
        <Chrome />
        <main>
            <div className="h-[923px] pt-[19px] px-5 flex gap-[51px] items-start bg-[#dedcdf]">
                <div className="relative flex-1 min-w-0 rounded-xl border-t-[13px] border-l-[29px] border-r-[27px] border-b-[32px] border-t-[#c1bfc2] border-l-[#d8d6d9] border-r-[#dddcdf] border-b-[#e2e1e3]">
                    <div className="absolute -right-5 -bottom-3.5 w-9 h-3 rotate-45 blur-xs bg-[#cdccce]" />
                    <div className="relative pl-[9px] pr-[11px] pt-[11px] pb-[13px] rounded-xl bg-black">
                        <Screen />
                    </div>
                </div>
                <FrontPanel />
            </div>
            <form className="px-[11px] pt-[9px] flex items-center text-[13px] text-black">
                <button type="button" className="h-[23px] px-1 border border-[#8f8f9d] rounded bg-[#e9e9ed]">Instrument Home</button>
                <label htmlFor="autoscale" className="ml-2.5 text-[17px] leading-6 font-['DejaVu_Serif',serif]">Autoscale:</label>
                <input id="autoscale" type="checkbox" defaultChecked className="ml-2 w-3.5 h-3.5 accent-[#4a90d9]" />
            </form>
        </main>
    </div>
);

export default App;
